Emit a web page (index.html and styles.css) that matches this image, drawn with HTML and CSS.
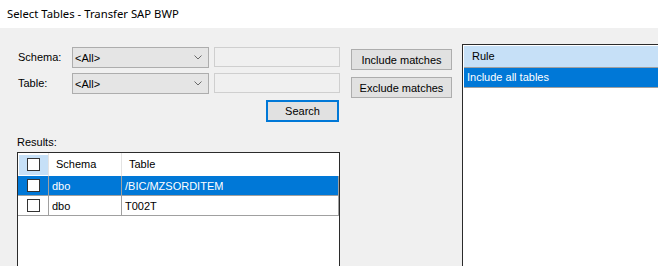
FILE: index.html
```html
<!DOCTYPE html>
<html>
<head>
<meta charset="utf-8">
<link rel="stylesheet" href="styles.css">
</head>
<body>
<div class="window">
  <div class="titlebar">Select Tables - Transfer SAP BWP</div>
  <div class="client">
    <div class="left">
      <div class="filters">
        <div class="fields">
          <span class="lbl">Schema:</span>
          <div class="combo"><span>&lt;All&gt;</span><svg width="8" height="5" viewBox="0 0 8 5"><path d="M0.5 0.5 L4 4 L7.5 0.5" fill="none" stroke="#6a6a6a" stroke-width="1"/></svg></div>
          <div class="textbox"></div>
          <span class="lbl">Table:</span>
          <div class="combo"><span>&lt;All&gt;</span><svg width="8" height="5" viewBox="0 0 8 5"><path d="M0.5 0.5 L4 4 L7.5 0.5" fill="none" stroke="#6a6a6a" stroke-width="1"/></svg></div>
          <div class="textbox"></div>
          <button class="btn search">Search</button>
        </div>
        <div class="actions">
          <button class="btn action">Include matches</button>
          <button class="btn action">Exclude matches</button>
        </div>
      </div>
      <div class="results-label">Results:</div>
      <div class="grid">
        <div class="row head">
          <div class="cell chk-head"><span class="chk"></span></div>
          <div class="cell htext">Schema</div>
          <div class="cell htext last">Table</div>
        </div>
        <div class="row data selected">
          <div class="cell chk-cell"><span class="chk"></span></div>
          <div class="cell">dbo</div>
          <div class="cell">/BIC/MZSORDITEM</div>
        </div>
        <div class="row data">
          <div class="cell chk-cell"><span class="chk"></span></div>
          <div class="cell">dbo</div>
          <div class="cell">T002T</div>
        </div>
      </div>
    </div>
    <div class="rules">
      <div class="rules-head">Rule</div>
      <div class="rules-row">Include all tables</div>
    </div>
  </div>
</div>
</body>
</html>
```
FILE: styles.css
```css
html, body {
  margin: 0;
  padding: 0;
  overflow: hidden;
}
body {
  width: 658px;
  height: 266px;
  background: #f0f0f0;
  font-family: "Liberation Sans", Arial, sans-serif;
  font-size: 11px;
  color: #000;
}
.window {
  display: flex;
  flex-direction: column;
  height: 266px;
}
.titlebar {
  height: 28px;
  flex: none;
  background: #fff;
  font-family: "Noto Sans", sans-serif;
  font-size: 11.3px;
  line-height: 28px;
  padding-left: 7px;
  box-sizing: border-box;
}
.client {
  display: flex;
  flex: 1;
  min-height: 0;
}
.left {
  width: 462px;
  flex: none;
  box-sizing: border-box;
  padding: 19px 0 0 17px;
  display: flex;
  flex-direction: column;
}
.filters {
  display: flex;
  align-items: flex-start;
}
.fields {
  display: grid;
  grid-template-columns: 50px 137px 126px;
  grid-template-rows: 21px 21px 22px;
  column-gap: 5px;
  row-gap: 5px;
}
.fields .search {
  grid-column: 3;
  grid-row: 3;
  margin-top: 1px;
}
.lbl {
  align-self: center;
  line-height: 13px;
  padding-left: 1px;
}
.combo {
  display: flex;
  align-items: center;
  justify-content: space-between;
  background: #e5e5e5;
  border: 1px solid #adadad;
  box-sizing: border-box;
  height: 21px;
  padding: 0 6px 0 2px;
}
.combo svg {
  display: block;
}
.textbox {
  height: 20px;
  background: #f0f0f0;
  border: 1px solid #cfcfcf;
  box-sizing: border-box;
}
.btn {
  font-family: "Liberation Sans", Arial, sans-serif;
  font-size: 11px;
  color: #000;
  background: #e1e1e1;
  border: 1px solid #adadad;
  box-sizing: border-box;
  padding: 0;
  margin: 0;
}
.search {
  justify-self: end;
  width: 73px;
  height: 22px;
  margin-right: 1px;
  border: 2px solid #0078d7;
}
.actions {
  display: flex;
  flex-direction: column;
  gap: 7px;
  margin-left: 11px;
  padding-top: 2px;
}
.action {
  width: 101px;
  height: 21px;
}
.results-label {
  margin-top: 15px;
  line-height: 13px;
}
.grid {
  margin-top: 3px;
  width: 323px;
  flex: 1;
  background: #fff;
  border: 1px solid #2b2b2b;
  border-bottom: none;
  box-sizing: border-box;
}
.row {
  display: grid;
  grid-template-columns: 31px 73px 1fr;
}
.row.head {
  height: 23px;
}
.row.head .cell {
  border-right: 1px solid #e3e3e3;
  line-height: 23px;
}
.row.head .cell.last {
  border-right: none;
}
.cell {
  border-right: 1px solid #a0a0a0;
  padding-left: 3px;
  line-height: 20px;
  white-space: nowrap;
  overflow: hidden;
}
.htext {
  padding-left: 7px;
}
.chk-head {
  padding: 2px 0 1px 1px;
  display: flex;
}
.chk-head .chk {
  flex: 1;
  background: #c6e0f7;
  display: flex;
}
.chk::after {
  content: "";
  width: 11px;
  height: 11px;
  border: 1px solid #333;
  background: #fff;
}
.chk-head .chk::after {
  margin: 3px 0 0 8px;
}
.chk-cell {
  padding: 0;
  display: flex;
}
.chk-cell .chk {
  display: flex;
  flex: 1;
}
.chk-cell .chk::after {
  margin: 3px 0 0 9px;
}
.row.data {
  height: 20px;
  border-bottom: 1px solid #a0a0a0;
  box-sizing: border-box;
}
.row.selected {
  background: #0078d7;
  color: #fff;
}
.rules {
  flex: 1;
  margin-top: 16px;
  margin-right: -10px;
  background: #fff;
  border: 1px solid #2b2b2b;
  border-bottom: none;
  padding: 1px;
}
.rules-head {
  height: 22px;
  background: #c6e0f7;
  border-bottom: 1px solid #a0a0a0;
  box-sizing: border-box;
  line-height: 21px;
  padding-left: 8px;
}
.rules-row {
  height: 20px;
  background: #0078d7;
  color: #fff;
  border-bottom: 1px solid #a0a0a0;
  box-sizing: border-box;
  line-height: 19px;
  padding-left: 3px;
}
```
